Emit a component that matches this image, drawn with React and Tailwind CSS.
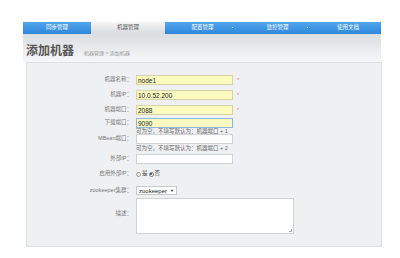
const font = { fontFamily: '"Liberation Sans", "Noto Sans CJK SC", sans-serif' };

function Row({ label, children, className = '' }) {
  return (
    <div className={`flex items-center ${className}`}>
      <div className="w-[105px] text-right text-[5.5px] leading-none text-[#777]">{label}</div>
      <div className="ml-[4px] flex items-center">{children}</div>
    </div>
  );
}

function Input({ value = '', yellow = false, focus = false }) {
  const base = 'w-[97px] h-[10px] px-[1px] text-[6.5px] leading-[9px] text-[#222] border';
  const tone = focus
    ? 'bg-[#fbfbc0] border-[#8fb4e0]'
    : yellow
    ? 'bg-[#fbfbc0] border-[#d4d4a8]'
    : 'bg-white border-[#cfd2d6]';
  return <div className={`${base} ${tone}`}>{value}</div>;
}

function Star() {
  return <span className="ml-[4px] text-[6px] leading-none text-[#f07a8a]">*</span>;
}

function Hint({ text, className = '' }) {
  return (
    <div className={`pl-[109px] h-[6px] text-[5.5px] leading-[6px] text-[#666] ${className}`}>{text}</div>
  );
}

export default function App() {
  const tabs = [
    { name: '同步管理', w: 'w-[68px]' },
    { name: '机器管理', w: 'w-[74px]', active: true },
    { name: '配置管理', w: 'w-[75px]', dot: true },
    { name: '监控管理', w: 'w-[75px]', dot: true },
    { name: '使用文档', w: 'w-[66px]' },
  ];

  return (
    <div className="w-[400px] h-[258px] bg-white overflow-hidden" style={font}>
      <div className="pt-[22px] pl-[23px] w-[381px]">
        {/* nav */}
        <div className="flex h-[12px] bg-gradient-to-b from-[#52a6ee] to-[#2f86da]">
          {tabs.map((t) => (
            <div
              key={t.name}
              className={`${t.w} relative flex items-center justify-center text-[5.5px] leading-none ${
                t.active
                  ? 'bg-gradient-to-b from-[#f3f4f5] to-[#d8dcdf] text-[#555]'
                  : 'text-white'
              }`}
            >
              {t.name}
              {t.dot && (
                <span className="absolute right-[7px] top-[5px] w-[1px] h-[1px] bg-[#cfe3f7]" />
              )}
            </div>
          ))}
        </div>

        {/* title */}
        <div className="h-[28px] flex items-end pb-[5px] pl-[3px] bg-gradient-to-b from-[#dadde1] to-[#f6f7f8]">
          <span className="text-[12px] leading-none font-bold text-[#555]">添加机器</span>
          <span className="ml-[10px] mb-[1px] text-[5px] leading-none text-[#999]">机器管理 &gt; 添加机器</span>
        </div>

        {/* form panel */}
        <div className="ml-[3px] w-[356px] h-[185px] pt-[12px] bg-[#eff0f2] border border-[#dedfe2]">
          <Row label="机器名称：">
            <Input value="node1" yellow />
            <Star />
          </Row>
          <Row label="机器IP：" className="mt-[5px]">
            <Input value="10.0.52.200" yellow />
            <Star />
          </Row>
          <Row label="机器端口：" className="mt-[5px]">
            <Input value="2088" yellow />
            <Star />
          </Row>
          <Row label="下载端口：" className="mt-[3px]">
            <Input value="9090" focus />
          </Row>
          <Hint text="可为空，不填写默认为：机器端口 + 1" />
          <Row label="MBean端口：">
            <Input />
          </Row>
          <Hint text="可为空，不填写默认为：机器端口 + 2" className="mt-[1px]" />
          <Row label="外部IP：" className="mt-[3px]">
            <Input />
          </Row>
          <Row label="启用外部IP：" className="mt-[5px] h-[10px]">
            <div className="flex items-center text-[5.5px] leading-none text-[#444]">
              <span className="w-[5px] h-[5px] rounded-full border border-[#999] bg-white" />
              <span className="ml-[1px]">是</span>
              <span className="ml-[1px] w-[5px] h-[5px] rounded-full border border-[#777] bg-white flex items-center justify-center">
                <span className="w-[2px] h-[2px] rounded-full bg-[#333]" />
              </span>
              <span className="ml-[1px]">否</span>
            </div>
          </Row>
          <Row label="zookeeper集群：" className="mt-[7px]">
            <div className="w-[41px] h-[9px] flex items-center px-[2px] bg-white border border-[#c6c9cd] text-[6px] leading-none text-[#222]">
              zookeeper
              <span className="ml-[3px] text-[4px]">▼</span>
            </div>
          </Row>
          <div className="flex mt-[3px]">
            <div className="w-[105px] pt-[13px] text-right text-[5.5px] leading-none text-[#777]">描述：</div>
            <div className="ml-[4px] relative w-[158px] h-[36px] bg-white border border-[#cfd2d6]">
              <span className="absolute right-[1px] bottom-[1px] w-[3px] h-[3px] border-r border-b border-[#aaa]" />
            </div>
          </div>
        </div>
      </div>
    </div>
  );
}
